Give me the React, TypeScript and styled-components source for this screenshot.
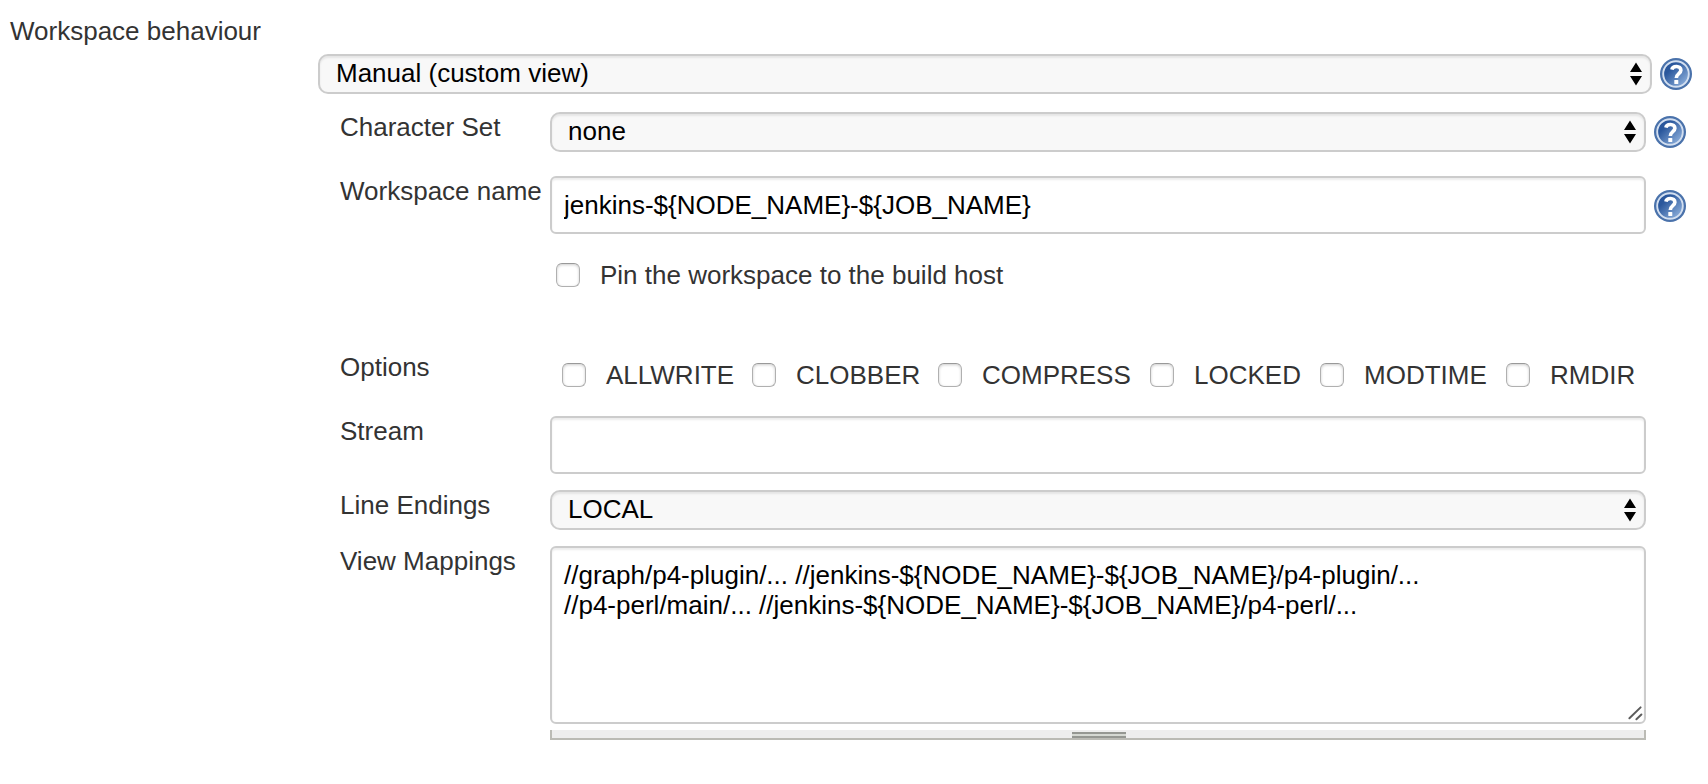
import React from 'react';
import styled, { createGlobalStyle } from 'styled-components';

const GlobalStyle = createGlobalStyle`
  *, *::before, *::after { box-sizing: border-box; }
  body {
    margin: 0;
    background: #fff;
    color: #333;
    font: 26px/30px "Liberation Sans", Helvetica, Arial, sans-serif;
  }
`;

const Page = styled.main`
  width: 1708px;
  height: 784px;
  padding: 16px 0 0 10px;
  overflow: hidden;
`;

const SectionTitle = styled.div`
  height: 38px;
  white-space: nowrap;
`;

const Section = styled.div`
  padding-left: 308px;
`;

const ControlLine = styled.div`
  display: flex;
  align-items: center;
  gap: 8px;
`;

const Fields = styled.div`
  padding: 18px 0 0 22px;
`;

const Row = styled.div<{ $height: number }>`
  display: grid;
  grid-template-columns: 210px 1fr;
  height: ${(p) => p.$height}px;
`;

const Label = styled.div`
  white-space: nowrap;
`;

const SelectBox = styled.div<{ $width: number }>`
  display: flex;
  justify-content: space-between;
  width: ${(p) => p.$width}px;
  height: 40px;
  padding: 2px 8px 0 16px;
  border: 2px solid #ccc;
  border-radius: 10px;
  background: #f8f8f8;
  box-shadow: inset 0 2px 2px rgba(0, 0, 0, 0.075);
  color: #000;
`;

const Arrows = styled.svg`
  display: block;
  width: 12px;
  height: 24px;
  margin-top: 4px;
`;

const TextBox = styled.input`
  display: block;
  width: 1096px;
  height: 58px;
  margin: 0;
  padding: 0 12px;
  border: 2px solid #ccc;
  border-radius: 6px;
  background: #fff;
  box-shadow: inset 0 2px 2px rgba(0, 0, 0, 0.075);
  color: #000;
  font: inherit;
  outline: none;
`;

const MappingBox = styled.div`
  display: flex;
  flex-direction: column;
  justify-content: space-between;
  width: 1096px;
  height: 178px;
  padding: 12px 0 0 12px;
  border: 2px solid #ccc;
  border-radius: 6px;
  box-shadow: inset 0 2px 2px rgba(0, 0, 0, 0.075);
  color: #000;
  white-space: pre;
`;

const Corner = styled.svg`
  display: block;
  align-self: flex-end;
  width: 20px;
  height: 20px;
`;

const ResizeBar = styled.div`
  display: flex;
  justify-content: center;
  width: 1096px;
  height: 10px;
  margin-top: 6px;
  padding: 2px 0 0 2px;
  border: solid #bbbbb5;
  border-width: 0 2px 2px;
  background: #eee;
`;

const Grip = styled.div`
  width: 54px;
  height: 6px;
  border: solid #959792;
  border-width: 2px 0;
  background: #d5d8d2;
`;

const Checks = styled.div<{ $top: number; $left: number }>`
  display: grid;
  grid-template-columns: 190px 186px 212px 170px 186px auto;
  align-content: start;
  padding: ${(p) => p.$top}px 0 0 ${(p) => p.$left}px;
`;

const CheckLabel = styled.label`
  display: flex;
  align-items: center;
  gap: 20px;
  white-space: nowrap;
`;

const Box = styled.span`
  flex: none;
  width: 24px;
  height: 24px;
  border: 1px solid #b0b0b0;
  border-top-color: #999;
  border-radius: 6px;
  background: #fff;
  box-shadow: inset 0 1px 3px rgba(0, 0, 0, 0.2);
`;

const HelpSvg = styled.svg<{ $drop: number }>`
  display: block;
  flex: none;
  width: 32px;
  height: 32px;
  margin-top: ${(p) => p.$drop}px;
`;

function Help({ drop = 0 }: { drop?: number }) {
  return (
    <HelpSvg viewBox="0 0 32 32" $drop={drop}>
      <defs>
        <linearGradient id="help-blue" x1="0.1" y1="0.1" x2="0.9" y2="0.9">
          <stop offset="0.25" stopColor="#2a579c" />
          <stop offset="1" stopColor="#8eb0dc" />
        </linearGradient>
      </defs>
      <circle cx="16" cy="16" r="16" fill="#4a72ab" />
      <circle cx="16" cy="16" r="12.8" fill="url(#help-blue)" stroke="#d3dff0" strokeWidth="1.9" />
      <path d="M11.9 11.6C12.6 7.4 20.9 7.4 20.9 12.2C20.9 15.6 16.3 15.6 16.3 20" fill="none" stroke="#fff" strokeWidth="3.6" />
      <rect x="14.3" y="22" width="4" height="4" rx="0.6" fill="#fff" />
    </HelpSvg>
  );
}

function Select({ value, width }: { value: string; width: number }) {
  return (
    <SelectBox $width={width}>
      <span>{value}</span>
      <Arrows viewBox="0 0 12 24">
        <path d="M6 0.5L12 10H0ZM0 14H12L6 23.5Z" fill="#000" />
      </Arrows>
    </SelectBox>
  );
}

function Check({ text }: { text: string }) {
  return (
    <CheckLabel>
      <Box />
      {text}
    </CheckLabel>
  );
}

const options = ['ALLWRITE', 'CLOBBER', 'COMPRESS', 'LOCKED', 'MODTIME', 'RMDIR'];

export default function App() {
  return (
    <Page>
      <GlobalStyle />
      <SectionTitle>Workspace behaviour</SectionTitle>
      <Section>
        <ControlLine>
          <Select value="Manual (custom view)" width={1334} />
          <Help />
        </ControlLine>
        <Fields>
          <Row $height={64}>
            <Label>Character Set</Label>
            <div>
              <ControlLine>
                <Select value="none" width={1096} />
                <Help />
              </ControlLine>
            </div>
          </Row>
          <Row $height={84}>
            <Label>Workspace name</Label>
            <div>
              <ControlLine>
                <TextBox defaultValue="jenkins-${NODE_NAME}-${JOB_NAME}" />
                <Help drop={2} />
              </ControlLine>
            </div>
          </Row>
          <Row $height={92}>
            <span />
            <Checks $top={0} $left={6}>
              <Check text="Pin the workspace to the build host" />
            </Checks>
          </Row>
          <Row $height={64}>
            <Label>Options</Label>
            <Checks $top={8} $left={12}>
              {options.map((o) => (
                <Check key={o} text={o} />
              ))}
            </Checks>
          </Row>
          <Row $height={74}>
            <Label>Stream</Label>
            <TextBox />
          </Row>
          <Row $height={56}>
            <Label>Line Endings</Label>
            <Select value="LOCAL" width={1096} />
          </Row>
          <Row $height={194}>
            <Label>View Mappings</Label>
            <div>
              <MappingBox>
                {'//graph/p4-plugin/... //jenkins-${NODE_NAME}-${JOB_NAME}/p4-plugin/...\n//p4-perl/main/... //jenkins-${NODE_NAME}-${JOB_NAME}/p4-perl/...'}
                <Corner viewBox="0 0 20 20">
                  <path d="M5.4 16.3L16.6 5.4M12.4 17.2L17.4 12.5" stroke="#5c5c5c" strokeWidth="2" strokeLinecap="round" />
                </Corner>
              </MappingBox>
              <ResizeBar>
                <Grip />
              </ResizeBar>
            </div>
          </Row>
        </Fields>
      </Section>
    </Page>
  );
}
